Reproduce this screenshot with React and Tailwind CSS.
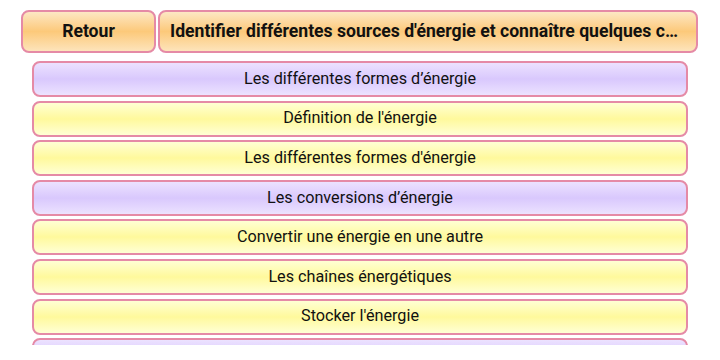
const items = [
  { label: "Les différentes formes d’énergie", kind: "chapter" },
  { label: "Définition de l'énergie", kind: "lesson" },
  { label: "Les différentes formes d'énergie", kind: "lesson" },
  { label: "Les conversions d’énergie", kind: "chapter" },
  { label: "Convertir une énergie en une autre", kind: "lesson" },
  { label: "Les chaînes énergétiques", kind: "lesson" },
  { label: "Stocker l'énergie", kind: "lesson" },
  { label: "Les sources d'énergie", kind: "chapter" },
];

const bg = {
  chapter: "bg-[linear-gradient(to_bottom,#ece2ff_0%,#d9c8fd_50%,#ece2ff_100%)]",
  lesson: "bg-[linear-gradient(to_bottom,#ffffd4_0%,#fff99c_50%,#ffffd4_100%)]",
};

export default function App() {
  return (
    <div className="w-[720px] h-[360px] overflow-hidden bg-white font-['Roboto',sans-serif] text-[#111]">
      <div className="flex gap-[2px] pl-[21px] pr-[22px] pt-[10px]">
        <button className="w-[135px] h-[43px] shrink-0 rounded-[8px] border-2 border-[#e58aa6] bg-[linear-gradient(to_bottom,#fde7c4_0%,#fcc97a_50%,#fde4bb_100%)] text-[17.6px] font-bold">
          Retour
        </button>
        <button className="flex-1 min-w-0 h-[43px] rounded-[8px] border-2 border-[#e58aa6] bg-[linear-gradient(to_bottom,#fde7c4_0%,#fcc97a_50%,#fde4bb_100%)] text-[17.6px] font-bold px-[10px] truncate">
          Identifier différentes sources d'énergie et connaître quelques conversions d'énergie
        </button>
      </div>
      <div className="h-[288px] mt-[4px] overflow-hidden">
        <div className="flex flex-col gap-[3.6px] pl-[32px] pr-[32px] pt-[4px]">
          {items.map((it, i) => (
            <div
              key={i}
              className={`h-[36px] shrink-0 rounded-[8px] border-2 border-[#e58aa6] flex items-center justify-center text-[16.2px] ${bg[it.kind]}`}
            >
              {it.label}
            </div>
          ))}
        </div>
      </div>
    </div>
  );
}
